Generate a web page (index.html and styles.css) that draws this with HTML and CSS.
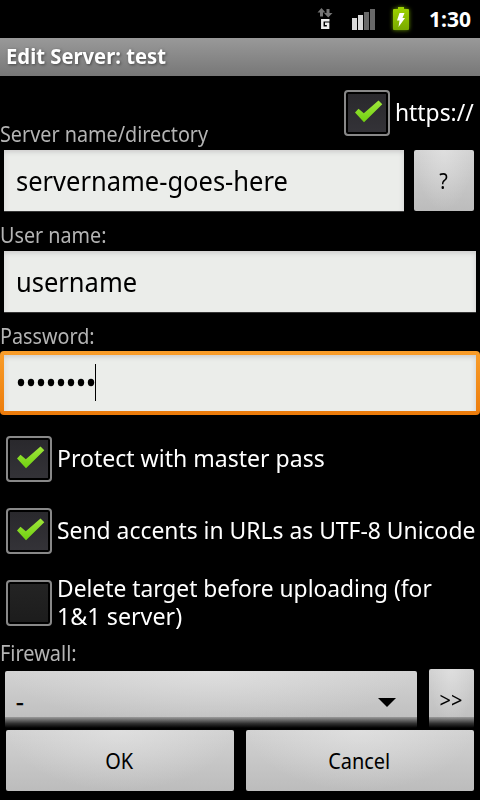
FILE: index.html
```
<!DOCTYPE html>
<html lang="en">
<head>
<meta charset="utf-8">
<title>Edit Server: test</title>
<link rel="stylesheet" href="styles.css">
</head>
<body>
<svg width="0" height="0" class="defs" aria-hidden="true">
  <defs>
    <linearGradient id="green" x1="0" y1="0" x2="0" y2="1"><stop offset="0" stop-color="#a0e63c"/><stop offset="1" stop-color="#70d010"/></linearGradient>
    <linearGradient id="batt" x1="0" y1="0" x2="0" y2="1"><stop offset="0" stop-color="#9ed400"/><stop offset="1" stop-color="#79a900"/></linearGradient>
    <symbol id="tick" viewBox="0 0 46 46"><path d="M11 22.500l3.500-3.800 5.300 4.500L34.500 10.500l3.800 3.800L20 32.300z" fill="url(#green)"/></symbol>
  </defs>
</svg>
<header class="status">
  <svg width="118" height="38" viewBox="310 0 118 38">
    <path d="M321.500 8l4 4.500h-2.500v4h-3v-4h-2.500zM326.500 9h3v4h3l-4.300 4.500-4.200-4.500h2.500z" fill="#747474"/>
    <path d="M329.500 20.300H322.300v7.500h5.800v-4h-3.100" fill="none" stroke="#eee" stroke-width="2.500"/>
    <path d="M352 18h5v12h-5zM358 15h5v15h-5z" fill="#d8d8d8"/>
    <path d="M364 12h5v18h-5zM370 9h5v21h-5z" fill="#686868"/>
    <path class="battery" d="M394 9h4V7h6v2h4q1 0 1 1v19q0 1-1 1h-14q-1 0-1-1V10q0-1 1-1z" fill="url(#batt)"/>
    <path d="M399.500 13h5l-2 5h2.500l-6.500 9 1-6.500H397z" fill="#fff"/>
  </svg>
  <span class="clock">1:30</span>
</header>
<h1 class="title"><span class="t-title">Edit Server: test</span></h1>
<main class="form">
  <div class="server-head">
    <span class="label"><span class="t-server">Server name/directory</span></span>
    <div class="https"><i class="box on"><svg><use href="#tick"/></svg></i><span class="t-https">https://</span></div>
  </div>
  <div class="server-row">
    <div class="field"><span class="t-name">servername-goes-here</span></div>
    <div class="btn help"><span>?</span></div>
  </div>
  <div class="label user"><span class="t-user">User name:</span></div>
  <div class="field inset"><span class="t-name">username</span></div>
  <div class="label pass"><span class="t-user">Password:</span></div>
  <div class="focus"><div class="field password"><svg width="82" height="38" viewBox="0 0 82 38"><g><ellipse cx="5" cy="18.500" rx="3.200" ry="3.700"/><ellipse cx="15" cy="18.500" rx="3.200" ry="3.700"/><ellipse cx="25" cy="18.500" rx="3.200" ry="3.700"/><ellipse cx="35" cy="18.500" rx="3.200" ry="3.700"/><ellipse cx="45" cy="18.500" rx="3.200" ry="3.700"/><ellipse cx="55" cy="18.500" rx="3.200" ry="3.700"/><ellipse cx="65" cy="18.500" rx="3.200" ry="3.700"/><ellipse cx="75" cy="18.500" rx="3.200" ry="3.700"/></g><path d="M79 0h1v37h-1z"/></svg></div></div>
  <div class="checks">
    <div class="check"><i class="box on"><svg><use href="#tick"/></svg></i><span class="t-protect">Protect with master pass</span></div>
    <div class="check"><i class="box on"><svg><use href="#tick"/></svg></i><span class="t-send">Send accents in URLs as UTF-8 Unicode</span></div>
    <div class="check"><i class="box"></i><div class="lines"><span class="t-delete">Delete target before uploading (for</span><span class="t-delete2">1&amp;1 server)</span></div></div>
  </div>
  <div class="label fire"><span class="t-fire">Firewall:</span></div>
  <div class="fire-row">
    <div class="btn spinner"><span>-</span><svg width="18" height="9"><path d="M0 0h18L9 9z"/></svg></div>
    <div class="btn more"><span>&gt;&gt;</span></div>
  </div>
</main>
<footer class="actions">
  <div class="btn"><span class="t-ok">OK</span></div>
  <div class="btn"><span class="t-cancel">Cancel</span></div>
</footer>
</body>
</html>
```
FILE: styles.css
```
* { box-sizing: border-box; }
body { margin: 0; width: 480px; height: 800px; overflow: hidden; background: #000; color: #fff; font-family: "Noto Sans", "Open Sans", sans-serif; display: flex; flex-direction: column; }
.defs { position: absolute; }
span { display: inline-block; white-space: nowrap; transform-origin: 0 50%; }
.status { height: 38px; display: flex; justify-content: flex-end; align-items: center; gap: 1px; padding-right: 9px; flex: none; }
.status svg { flex: none; }
.battery { filter: drop-shadow(0 0 2px #6c9900); }
.clock { width: 42px; font-size: 21px; font-weight: 700; line-height: 38px; }
.title { margin: 0; height: 38px; flex: none; padding-left: 6px; font-size: 21px; line-height: 37px; background: linear-gradient(#999, #777); text-shadow: 1px 1px 3px #444; }
.form { height: 654px; flex: none; }
.server-head { height: 74px; display: flex; justify-content: space-between; align-items: flex-end; }
.label { color: #b4b4b4; font-size: 21px; line-height: 28px; height: 28px; }
.server-head .label { height: 30px; }
.https { display: flex; gap: 5px; width: 136px; height: 74px; align-items: center; font-size: 24px; line-height: 28px; }
.https > span, .check > span, .lines { margin-top: -2px; }
.lines { display: flex; flex-direction: column; align-items: flex-start; }
.box { width: 46px; height: 46px; flex: none; border: 2px solid #888; border-radius: 4px; background: linear-gradient(#242424, #1c1c1c); box-shadow: inset 0 0 0 2px #000; }
.box.on { background: linear-gradient(#29282c, #343338); }
.box svg { display: block; width: 46px; height: 46px; margin: -2px; }
.server-row { display: flex; gap: 10px; padding: 0 6px 0 4px; height: 62px; }
.field { flex: 1; height: 62px; padding-left: 12px; color: #000; font-size: 27px; line-height: 61px; background: #ebedea; box-shadow: inset 0 5px 5px -3px #ccc, inset -5px 0 4px -3px #ddd, inset 5px 0 4px -3px #e0e0e0; border-bottom: 1px solid #363636; }
.btn { color: #000; font-size: 21px; display: flex; align-items: center; justify-content: center; border-radius: 2px; background: radial-gradient(ellipse at 50% 0, rgba(235,235,235,.5), rgba(210,210,210,0) 70%), linear-gradient(#d2d2d2, #bcbcbc); }
.btn span { transform-origin: 50% 50%; }
.help { width: 60px; height: 61px; }
.help span { transform: scaleX(.94); }
.user { margin-top: 9px; height: 30px; }
.inset { margin: 0 4px; }
.pass { margin-top: 9px; height: 29px; }
.focus { height: 64px; padding: 4px; border-radius: 4px; background: linear-gradient(#f99d2a, #ec7b0b); }
.password { height: 56px; border: 0; line-height: 0; padding-top: 9px; }
.checks { padding-top: 8px; }
.check { height: 72px; display: flex; align-items: center; gap: 5px; padding-left: 6px; font-size: 24px; line-height: 28px; }
.fire { height: 30px; }
.fire-row { display: flex; align-items: flex-end; gap: 12px; padding: 0 6px 0 5px; height: 59px; position: relative; }
.fire-row::after { content: ""; position: absolute; left: 0; right: 0; bottom: 0; height: 11px; background: linear-gradient(rgba(0,0,0,.2), rgba(0,0,0,.75) 60%, #000); }
.spinner { width: 412px; height: 57px; justify-content: space-between; padding: 5px 21px 0 11px; font-size: 24px; }
.spinner span { -webkit-text-stroke: .5px #000; margin-top: -4px; }
.more { width: 45px; height: 59px; padding-top: 3px; }
.more span { transform: scaleX(.95); }
.actions { height: 61px; display: flex; gap: 12px; padding: 0 6px; }
.actions .btn { flex: 1; }
.t-title { transform: scaleX(.964); }
.t-server { transform: scaleX(.942); }
.t-https { transform: scaleX(.952); }
.t-name { transform: scaleX(.944); }
.t-user { transform: scaleX(.94); }
.t-protect { transform: scaleX(.96); }
.t-send { transform: scaleX(.953); }
.t-delete { transform: scaleX(.949); }
.t-delete2 { transform: scaleX(.97); }
.t-fire { transform: scaleX(.95); }
.btn .t-ok, .btn .t-cancel { transform: translateX(-.5px) scaleX(.95); }
```
